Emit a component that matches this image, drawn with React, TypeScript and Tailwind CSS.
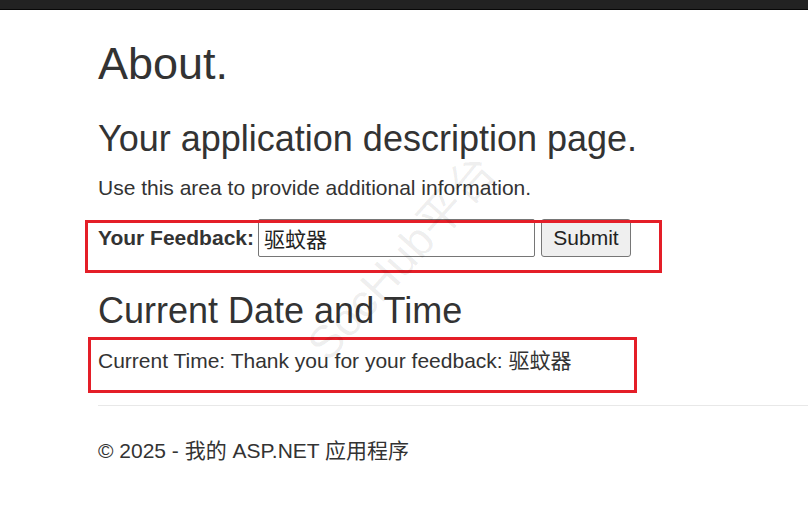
const FEEDBACK = '驱蚊器'

export default function App() {
  return (
    <div className="relative h-[514px] overflow-hidden bg-white text-[#333] font-['Liberation_Sans','Noto_Sans_CJK_SC',sans-serif]">
      <div className="h-[10px] bg-[#222] border-b border-[#080808]" />

      <main className="pl-[98px]">
        <h2 className="mt-[29px] text-[45px] leading-[49.5px] font-normal">About.</h2>
        <h3 className="mt-[30px] text-[36px] leading-[39.6px] font-normal">Your application description page.</h3>
        <p className="mt-[15px] text-[21px] leading-[30px]">Use this area to provide additional information.</p>

        <form className="mt-[16px] flex items-center h-[38px]" onSubmit={(e) => e.preventDefault()}>
          <label className="text-[21px] leading-[30px] font-bold">Your Feedback:</label>
          <input
            defaultValue={FEEDBACK}
            className="ml-[4px] w-[277px] h-[38px] pl-[5px] border border-[#767676] rounded-[2px] text-[21px] text-[#222] outline-none"
          />
          <button className="ml-[6px] w-[90px] h-[38px] bg-[#efefef] border border-[#767676] rounded-[3px] text-[21px] text-[#222]">
            Submit
          </button>
        </form>

        <h3 className="mt-[34px] text-[36px] leading-[39.6px] font-normal">Current Date and Time</h3>
        <p className="mt-[15px] text-[21px] leading-[30px]">Current Time: Thank you for your feedback: {FEEDBACK}</p>

        <hr className="mt-[29px] border-0 border-t border-[#e8e8e8]" />
        <footer className="mt-[30px] text-[21px] leading-[30px]">© 2025 - 我的 ASP.NET 应用程序</footer>
      </main>

      {/* annotation boxes drawn over the screenshot */}
      <div className="absolute left-[85px] top-[220px] w-[577px] h-[53px] border-[3px] border-[#e41e28] pointer-events-none" />
      <div className="absolute left-[88px] top-[337px] w-[549px] h-[56px] border-[3px] border-[#e41e28] pointer-events-none" />

      {/* watermark */}
      <div className="absolute left-[402px] top-[258px] -translate-x-1/2 -translate-y-1/2 rotate-[-48deg] whitespace-nowrap text-[46px] text-black/[0.07] pointer-events-none select-none">
        SocHub平台
      </div>
    </div>
  )
}
